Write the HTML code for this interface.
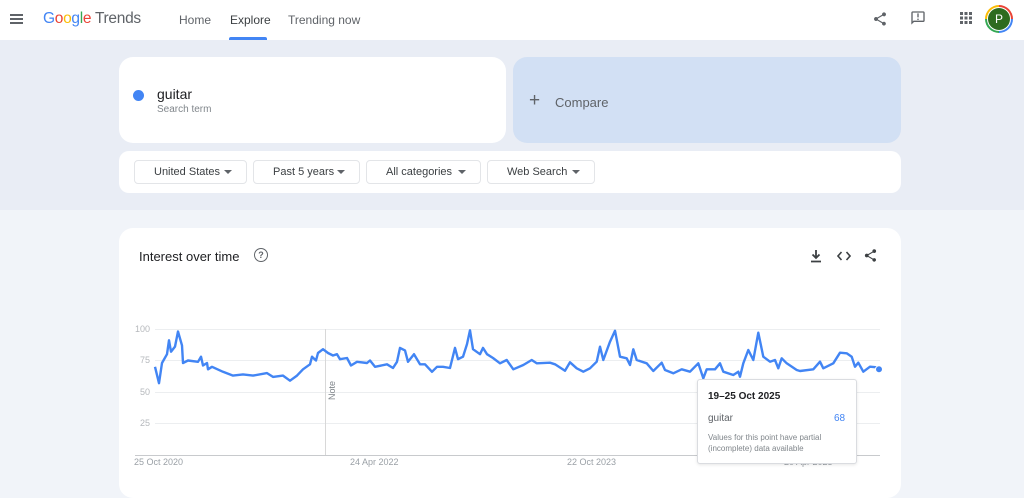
<!DOCTYPE html>
<html><head><meta charset="utf-8"><style>
*{margin:0;padding:0;box-sizing:border-box}
body{width:1024px;height:481px;overflow:hidden;background:#f1f4f9;font-family:"Liberation Sans",Arial,sans-serif;position:relative}
.hdr{position:absolute;left:0;top:0;width:1024px;height:40px;background:#fff}
.band{position:absolute;left:0;top:40px;width:1024px;height:170px;background:#e9edf5}
.abs{position:absolute}
.card{position:absolute;background:#fff;border-radius:14px}
.dd{position:absolute;top:160px;height:24px;border:1px solid #e3e5e8;border-radius:4px;font-size:11px;color:#3c4043;line-height:23px;padding-left:19px}
.dd:after{content:"";position:absolute;right:14px;top:9px;border-left:4px solid transparent;border-right:4px solid transparent;border-top:4px solid #5f6368}
.nav{position:absolute;top:13px;font-size:12px;color:#5f6368}
.yl{position:absolute;left:128px;width:22px;text-align:right;font-size:9px;color:#b5b8bc}
.xl{position:absolute;top:457px;font-size:9px;color:#9aa0a6}
</style></head><body>
<div class="hdr"></div>
<div class="abs" style="left:10px;top:14px;width:13px;height:2px;background:#5f6368;box-shadow:0 4px 0 #5f6368,0 8px 0 #5f6368"></div>
<div class="abs" style="left:43px;top:10px;font-size:15.5px;letter-spacing:-0.3px"><span style="color:#4285f4">G</span><span style="color:#ea4335">o</span><span style="color:#fbbc05">o</span><span style="color:#4285f4">g</span><span style="color:#34a853">l</span><span style="color:#ea4335">e</span> <span style="color:#5f6368">Trends</span></div>
<div class="nav" style="left:179px">Home</div>
<div class="nav" style="left:230px;color:#3c4043">Explore</div>
<div class="abs" style="left:229px;top:37px;width:38px;height:3px;background:#4285f4;border-radius:2px 2px 0 0"></div>
<div class="nav" style="left:288px">Trending now</div>
<svg class="abs" style="left:872px;top:11px" width="16" height="16" viewBox="0 0 24 24"><path fill="#5f6368" d="M18 16.1c-.8 0-1.4.3-2 .8l-7.1-4.2c.1-.2.1-.5.1-.7s0-.5-.1-.7L16 7.2c.5.5 1.2.8 2 .8 1.7 0 3-1.3 3-3s-1.3-3-3-3-3 1.3-3 3c0 .2 0 .5.1.7L8 9.8C7.5 9.3 6.8 9 6 9c-1.7 0-3 1.3-3 3s1.3 3 3 3c.8 0 1.5-.3 2-.8l7.1 4.2c-.1.2-.1.4-.1.6 0 1.6 1.3 2.9 2.9 2.9s2.9-1.3 2.9-2.9-1.2-2.9-2.8-2.9z"/></svg>
<svg class="abs" style="left:910px;top:10px" width="16" height="16" viewBox="0 0 24 24"><path fill="#5f6368" d="M20 2H4c-1.1 0-2 .9-2 2v18l4-4h14c1.1 0 2-.9 2-2V4c0-1.1-.9-2-2-2zm0 14H5.2L4 17.2V4h16v12zM11 5h2v6h-2zm0 8h2v2h-2z"/></svg>
<svg class="abs" style="left:960px;top:12px" width="12" height="12" viewBox="0 0 12 12" fill="#5f6368"><rect x="0" y="0" width="3" height="3"/><rect x="4.5" y="0" width="3" height="3"/><rect x="9" y="0" width="3" height="3"/><rect x="0" y="4.5" width="3" height="3"/><rect x="4.5" y="4.5" width="3" height="3"/><rect x="9" y="4.5" width="3" height="3"/><rect x="0" y="9" width="3" height="3"/><rect x="4.5" y="9" width="3" height="3"/><rect x="9" y="9" width="3" height="3"/></svg>
<div class="abs" style="left:985px;top:5px;width:28px;height:28px;border-radius:50%;background:conic-gradient(#ea4335 0 25%,#4285f4 25% 50%,#34a853 50% 75%,#fbbc05 75%)"></div>
<div class="abs" style="left:987px;top:7px;width:24px;height:24px;border-radius:50%;background:#fff"></div>
<div class="abs" style="left:988px;top:8px;width:22px;height:22px;border-radius:50%;background:#2e6b1f;color:#fff;font-size:12px;text-align:center;line-height:22px">P</div>
<div class="band"></div>
<div class="card" style="left:119px;top:57px;width:387px;height:86px"></div>
<div class="abs" style="left:133px;top:90px;width:11px;height:11px;border-radius:50%;background:#4285f4"></div>
<div class="abs" style="left:157px;top:86px;font-size:14px;color:#202124">guitar</div>
<div class="abs" style="left:157px;top:104px;font-size:10px;color:#80868b">Search term</div>
<div class="abs" style="left:513px;top:57px;width:388px;height:86px;background:#d2e0f4;border-radius:14px"></div>
<div class="abs" style="left:529px;top:90px;font-size:19px;color:#5f6368;font-weight:300">+</div>
<div class="abs" style="left:555px;top:95px;font-size:13px;color:#5f6368">Compare</div>
<div class="card" style="left:119px;top:151px;width:782px;height:42px;border-radius:10px"></div>
<div class="dd" style="left:134px;width:113px">United States</div>
<div class="dd" style="left:253px;width:107px">Past 5 years</div>
<div class="dd" style="left:366px;width:115px">All categories</div>
<div class="dd" style="left:487px;width:108px">Web Search</div>
<div class="card" style="left:119px;top:228px;width:782px;height:270px"></div>
<div class="abs" style="left:139px;top:249px;font-size:13px;color:#202124">Interest over time</div>
<div class="abs" style="left:254px;top:248px;width:14px;height:14px;border:1.5px solid #5f6368;border-radius:50%;font-size:9px;color:#5f6368;text-align:center;line-height:12px;font-weight:bold">?</div>
<svg class="abs" style="left:809px;top:249px" width="14" height="14" viewBox="0 0 14 14"><path d="M7 1v8M3.5 5.5L7 9l3.5-3.5M2 12.5h10" stroke="#3c4043" stroke-width="1.8" fill="none"/></svg>
<svg class="abs" style="left:837px;top:250px" width="14" height="12" viewBox="0 0 14 12"><path d="M4.5 2L1 6l3.5 4M9.5 2L13 6l-3.5 4" stroke="#3c4043" stroke-width="1.6" fill="none"/></svg>
<svg class="abs" style="left:863px;top:248px" width="15" height="15" viewBox="0 0 24 24"><path fill="#3c4043" d="M18 16.1c-.8 0-1.4.3-2 .8l-7.1-4.2c.1-.2.1-.5.1-.7s0-.5-.1-.7L16 7.2c.5.5 1.2.8 2 .8 1.7 0 3-1.3 3-3s-1.3-3-3-3-3 1.3-3 3c0 .2 0 .5.1.7L8 9.8C7.5 9.3 6.8 9 6 9c-1.7 0-3 1.3-3 3s1.3 3 3 3c.8 0 1.5-.3 2-.8l7.1 4.2c-.1.2-.1.4-.1.6 0 1.6 1.3 2.9 2.9 2.9s2.9-1.3 2.9-2.9-1.2-2.9-2.8-2.9z"/></svg>
<div class="yl" style="top:324px">100</div><div class="yl" style="top:355px">75</div><div class="yl" style="top:387px">50</div><div class="yl" style="top:418px">25</div>
<svg class="abs" style="left:0;top:0" width="1024" height="481">
<g stroke="#eceef0" stroke-width="1"><line x1="155" y1="329.5" x2="880" y2="329.5"/><line x1="155" y1="360.5" x2="880" y2="360.5"/><line x1="155" y1="392.5" x2="880" y2="392.5"/><line x1="155" y1="423.5" x2="880" y2="423.5"/></g>
<line x1="135" y1="455.5" x2="880" y2="455.5" stroke="#c8cacd"/>
<line x1="325.5" y1="329" x2="325.5" y2="455" stroke="#d8d8d8"/>
<text x="0" y="0" transform="translate(335,400) rotate(-90)" font-size="9" fill="#80868b" font-family="Liberation Sans">Note</text>
<polyline fill="none" stroke="#4285f4" stroke-width="2.4" stroke-linejoin="round" points="155,366.8 159,383.2 162,363 167,354.2 169,340.3 171,351.7 175,346.6 178,331.5 182,345.4 183,363 188,360.5 198,361.8 201,356.7 203,365.5 207,363 208,369.3 212,366.8 223,371.8 233,375.6 243,374.4 253,375.6 267,373.1 273,376.9 283,375.6 290,380.7 297,375.6 303,369.3 310,364.3 312,356.7 316,360.5 318,353 323,349.2 328,353 333,355.5 337,354.2 340,359.2 347,358 351,365.5 357,361.8 367,363 370,360.5 375,366.8 387,364.3 393,368 397,361.8 400,347.9 405,350.4 408,361.8 414,354.2 420,364.3 425,364.3 432,371.8 437,366.8 443,366.8 450,368 455,347.9 458,359.2 463,356.7 467,344.1 470,330.3 473,349.2 480,354.2 483,347.9 487,354.2 493,358 500,363.3 506.7,360 513.3,369.3 523.3,365 531.7,360 536.7,363.3 550,362.7 555,364.3 565,370.7 570,362.3 576.7,368.3 583.3,371.7 590,368.3 596.7,361.7 600,346.7 603.3,360 610,341.7 615,330.7 620,356.7 626.7,358.3 630,365 633.3,349.3 636.7,360 646.7,363.3 653.3,371 661.7,362.7 665,370 673.3,373.3 681.7,369.3 690,371.7 698.3,363.3 703.3,378.3 706.7,369.3 715,369.3 720,363.3 723.3,371.7 733.3,375 738.3,371.7 740,376.7 743.3,363.3 748.3,350 753.3,360 758.3,332.7 763.3,356.7 770,361.7 775,360 778.3,368.3 781.7,358.3 786.7,363.3 796.7,370 800,371 813.3,369.3 820,361.7 823.3,368.3 833.3,363.3 840,352.7 846.7,353.3 851.7,356.7 855,366.7 858.3,362.7 863.3,371.7 870,366.7 876.7,367.3 879,369.3"/>
<circle cx="879" cy="369.3" r="3.5" fill="#4285f4" stroke="#fff" stroke-width="1"/>
</svg>
<div class="xl" style="left:134px">25 Oct 2020</div>
<div class="xl" style="left:350px">24 Apr 2022</div>
<div class="xl" style="left:567px">22 Oct 2023</div>
<div class="xl" style="left:784px">20 Apr 2025</div>
<div class="abs" style="left:697px;top:379px;width:160px;height:85px;background:#fff;border:1px solid #dadce0;border-radius:3px;box-shadow:0 1px 3px rgba(0,0,0,.1)"></div>
<div class="abs" style="left:708px;top:391px;font-size:10px;font-weight:bold;color:#202124">19–25 Oct 2025</div>
<div class="abs" style="left:708px;top:413px;font-size:10px;color:#5f6368">guitar</div>
<div class="abs" style="left:834px;top:413px;font-size:10px;color:#4285f4">68</div>
<div class="abs" style="left:708px;top:432px;font-size:8px;line-height:11px;color:#80868b">Values for this point have partial<br>(incomplete) data available</div>
</body></html>
